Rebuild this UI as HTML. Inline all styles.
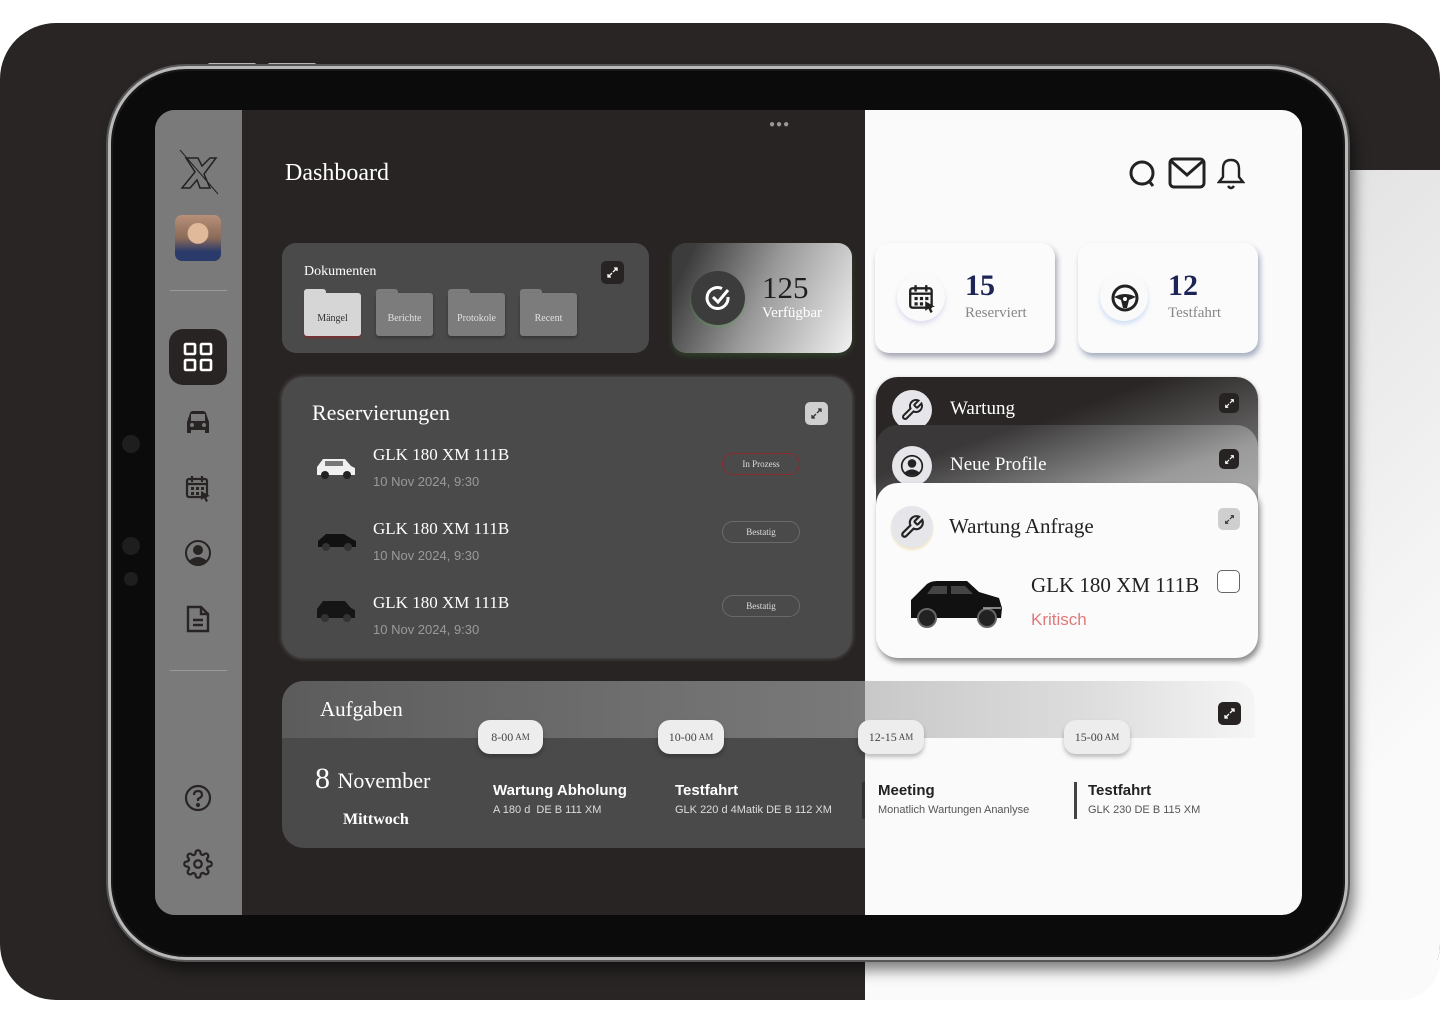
<!DOCTYPE html>
<html><head><meta charset="utf-8"><style>
*{box-sizing:border-box;margin:0;padding:0}
body{width:1440px;height:1024px;background:#fff;position:relative;overflow:hidden;font-family:"Liberation Sans",sans-serif}
.a{position:absolute}
.serif{font-family:"Liberation Serif",serif}
.exp{position:absolute;width:23px;height:23px;border-radius:5px;background:#262322;display:flex;align-items:center;justify-content:center}
.folder{position:absolute;top:289px;width:57px;height:47px}
.folder .tab{position:absolute;left:0;top:0;width:22px;height:8px;border-radius:3px 3px 0 0}
.folder .body{position:absolute;left:0;top:4px;width:57px;height:43px;border-radius:3px;font-family:"Liberation Serif",serif;font-size:10px;display:flex;align-items:center;justify-content:center;padding-top:8px;box-shadow:0 2px 3px rgba(0,0,0,.3)}
.row-t{position:absolute;left:373px;font-family:"Liberation Serif",serif;font-size:17px;color:#fff}
.row-d{position:absolute;left:373px;font-size:13px;color:#9a9a9a}
.badge{position:absolute;left:722px;width:78px;height:22px;border:1px solid #6a6a6a;border-radius:11px;color:#ddd;font-family:"Liberation Serif",serif;font-size:9px;display:flex;align-items:center;justify-content:center}
.pill{position:absolute;top:720px;height:34px;border-radius:12px;background:#ededed;box-shadow:0 3px 4px rgba(0,0,0,.25);font-family:"Liberation Serif",serif;font-size:12px;color:#444;display:flex;align-items:center;justify-content:center}
.pill small{font-size:9px;margin-left:2px}
.ev-t{position:absolute;top:782px;font-size:15px;font-weight:bold}
.ev-s{position:absolute;top:804px;font-size:11px}
.stat{position:absolute;top:243px;width:180px;height:110px;background:#fbfbfb;border-radius:14px;box-shadow:2px 4px 6px rgba(60,60,90,.45)}
.stat .c{position:absolute;left:22px;top:30px;width:48px;height:48px;border-radius:50%;background:#fafafa;box-shadow:0 3px 5px rgba(160,150,210,.3)}
.stat .n{position:absolute;left:90px;top:26px;font-family:"Liberation Serif",serif;font-size:30px;font-weight:bold;color:#1c2556}
.stat .l{position:absolute;left:90px;top:62px;font-family:"Liberation Serif",serif;font-size:15px;color:#888}
</style></head><body>
<!-- background -->
<div class="a" style="left:0;top:23px;width:1440px;height:977px;background:#282524;border-radius:56px"></div>
<div class="a" style="left:865px;top:170px;width:575px;height:830px;background:linear-gradient(135deg,#cfcfcf 0%,#e6e6e6 40%,#fafafa 80%);border-radius:0 0 56px 0"></div>
<div class="a" style="left:865px;top:960px;width:575px;height:40px;background:#fafafa;border-radius:0 0 56px 0"></div>
<!-- tablet -->
<div class="a" style="left:207px;top:63px;width:50px;height:6px;background:#bbb;border-radius:3px"></div>
<div class="a" style="left:267px;top:63px;width:50px;height:6px;background:#bbb;border-radius:3px"></div>
<div class="a" style="left:108px;top:66px;width:1240px;height:894px;border-radius:78px;background:#1a1818;border:3px solid #b9b9b9;box-shadow:0 0 0 2px #555, 6px 10px 14px rgba(0,0,0,.5)"></div>
<div class="a" style="left:113px;top:71px;width:1230px;height:884px;border-radius:74px;background:#0b0b0b"></div>
<!-- screen -->
<div class="a" style="left:155px;top:110px;width:1147px;height:805px;border-radius:20px;overflow:hidden;background:#fafafa">
 <div class="a" style="left:0;top:0;width:710px;height:805px;background:#282423"></div>
 <div class="a" style="left:0;top:0;width:87px;height:805px;background:#7a7a7a"></div>
</div>
<!-- sidebar -->
<svg class="a" style="left:176px;top:148px" width="46" height="48" viewBox="0 0 46 48"><path d="M4 2 L42 46" stroke="#222" stroke-width="1"/><path d="M10 10 L22 10 L26 18 L34 10 L40 10 L28 26 L34 40 L24 40 L21 32 L14 40 L6 40 L19 24 Z" fill="none" stroke="#222" stroke-width="1.5"/></svg>
<div class="a" style="left:175px;top:215px;width:46px;height:46px;border-radius:7px;background:radial-gradient(circle at 50% 40%,#e0b89a 0 28%,transparent 30%),linear-gradient(180deg,#b89078 0%,#8a6a58 50%,#2a3a6a 80%)"></div>
<div class="a" style="left:170px;top:290px;width:57px;height:1px;background:#9a9a9a"></div>
<div class="a" style="left:169px;top:329px;width:58px;height:56px;border-radius:14px;background:#282423"></div>
<svg class="a" style="left:183px;top:342px" width="30" height="30" viewBox="0 0 30 30" fill="none" stroke="#fff" stroke-width="2.6"><rect x="2" y="2" width="10" height="10" rx="1"/><rect x="18" y="2" width="10" height="10" rx="1"/><rect x="2" y="18" width="10" height="10" rx="1"/><rect x="18" y="18" width="10" height="10" rx="1"/></svg>
<svg class="a" style="left:184px;top:408px" width="28" height="28" viewBox="0 0 28 28"><path d="M3 14 L6 5 Q7 3 9 3 L19 3 Q21 3 22 5 L25 14 L25 25 L21 25 L21 22 L7 22 L7 25 L3 25 Z" fill="#282423"/><rect x="7" y="6" width="14" height="7" fill="#7a7a7a"/><circle cx="8" cy="17" r="2" fill="#7a7a7a"/><circle cx="20" cy="17" r="2" fill="#7a7a7a"/></svg>
<svg class="a" style="left:184px;top:474px" width="28" height="28" viewBox="0 0 28 28" fill="none" stroke="#282423" stroke-width="2.2"><rect x="3" y="5" width="20" height="18" rx="2"/><path d="M8 2v6M18 2v6M3 10h20"/><g fill="#282423" stroke="none"><rect x="7" y="13" width="3" height="3"/><rect x="12" y="13" width="3" height="3"/><rect x="17" y="13" width="3" height="3"/><rect x="7" y="18" width="3" height="3"/><rect x="12" y="18" width="3" height="3"/><path d="M17 17 L26 22 L22 23 L24 27 L22 28 L20 24 L17 26 Z"/></g></svg>
<svg class="a" style="left:184px;top:539px" width="28" height="28" viewBox="0 0 28 28"><circle cx="14" cy="14" r="12" fill="none" stroke="#282423" stroke-width="2"/><circle cx="14" cy="11" r="5" fill="#282423"/><path d="M5 22 Q14 14 23 22 Q14 28 5 22Z" fill="#282423"/></svg>
<svg class="a" style="left:185px;top:604px" width="26" height="30" viewBox="0 0 26 30" fill="none" stroke="#282423" stroke-width="2.4"><path d="M3 3 H16 L23 10 V27 H3 Z"/><path d="M16 3 V10 H23 M8 16 H18 M8 21 H18"/></svg>
<div class="a" style="left:170px;top:670px;width:57px;height:1px;background:#9a9a9a"></div>
<svg class="a" style="left:184px;top:784px" width="28" height="28" viewBox="0 0 28 28" fill="none" stroke="#282423" stroke-width="2.2"><circle cx="14" cy="14" r="12"/><path d="M10 11 Q10 7 14 7 Q18 7 18 11 Q18 13 14 15 V17"/><circle cx="14" cy="21" r="1" fill="#282423"/></svg>
<svg class="a" style="left:183px;top:849px" width="30" height="30" viewBox="0 0 24 24" fill="none" stroke="#282423" stroke-width="1.8"><circle cx="12" cy="12" r="3"/><path d="M19.4 15a1.65 1.65 0 0 0 .33 1.82l.06.06a2 2 0 1 1-2.83 2.83l-.06-.06a1.65 1.65 0 0 0-1.82-.33 1.65 1.65 0 0 0-1 1.51V21a2 2 0 1 1-4 0v-.09A1.65 1.65 0 0 0 9 19.4a1.65 1.65 0 0 0-1.82.33l-.06.06a2 2 0 1 1-2.83-2.83l.06-.06A1.65 1.65 0 0 0 4.68 15a1.65 1.65 0 0 0-1.51-1H3a2 2 0 1 1 0-4h.09A1.65 1.65 0 0 0 4.6 9a1.65 1.65 0 0 0-.33-1.82l-.06-.06a2 2 0 1 1 2.83-2.83l.06.06A1.65 1.65 0 0 0 9 4.68 1.65 1.65 0 0 0 10 3.17V3a2 2 0 1 1 4 0v.09a1.65 1.65 0 0 0 1 1.51 1.65 1.65 0 0 0 1.82-.33l.06-.06a2 2 0 1 1 2.83 2.83l-.06.06A1.65 1.65 0 0 0 19.4 9a1.65 1.65 0 0 0 1.51 1H21a2 2 0 1 1 0 4h-.09a1.65 1.65 0 0 0-1.51 1z"/></svg>

<!-- header -->
<div class="a serif" style="left:285px;top:160px;font-size:24px;color:#fff">Dashboard</div>
<div class="a" style="left:769px;top:119px;font-size:10px;color:#999;letter-spacing:1px">●●●</div>
<svg class="a" style="left:1127px;top:158px" width="32" height="32" viewBox="0 0 32 32" fill="none" stroke="#222" stroke-width="3"><circle cx="15" cy="15" r="11"/><path d="M22 23 L26 28"/></svg>
<svg class="a" style="left:1168px;top:157px" width="38" height="32" viewBox="0 0 38 32" fill="none" stroke="#222" stroke-width="3"><rect x="2" y="2" width="34" height="28" rx="4"/><path d="M3 4 L19 18 L35 4"/></svg>
<svg class="a" style="left:1217px;top:157px" width="28" height="34" viewBox="0 0 28 34" fill="none" stroke="#222" stroke-width="2.4"><path d="M14 3 Q6 3 6 12 V20 L2 25 H26 L22 20 V12 Q22 3 14 3Z"/><path d="M11 29 Q14 33 17 29"/></svg>

<!-- Dokumenten -->
<div class="a" style="left:282px;top:243px;width:367px;height:110px;background:#4a4a4a;border-radius:14px"></div>
<div class="a serif" style="left:304px;top:264px;font-size:14px;color:#fff">Dokumenten</div>
<div class="exp" style="left:601px;top:261px"><svg width="13" height="13" viewBox="0 0 13 13" fill="none" stroke="#fff" stroke-width="1.3"><path d="M7 6 L11 2 M8 2 H11 V5 M6 7 L2 11 M2 8 V11 H5"/></svg></div>
<div class="folder" style="left:304px"><div class="tab" style="background:#d6d6d6"></div><div class="body" style="background:#d6d6d6;color:#333;box-shadow:0 2px 2px #7a3030">Mängel</div></div>
<div class="folder" style="left:376px"><div class="tab" style="background:#7c7c7c"></div><div class="body" style="background:#7c7c7c;color:#e0e0e0">Berichte</div></div>
<div class="folder" style="left:448px"><div class="tab" style="background:#7c7c7c"></div><div class="body" style="background:#7c7c7c;color:#e0e0e0">Protokole</div></div>
<div class="folder" style="left:520px"><div class="tab" style="background:#7c7c7c"></div><div class="body" style="background:#7c7c7c;color:#e0e0e0">Recent</div></div>

<!-- Verfügbar -->
<div class="a" style="left:672px;top:243px;width:180px;height:110px;border-radius:14px;background:linear-gradient(115deg,#3c3c3c 10%,#9a9a9a 50%,#f2f2f2 100%);box-shadow:0 3px 6px rgba(60,120,60,.35)"></div>
<div class="a" style="left:691px;top:271px;width:54px;height:54px;border-radius:50%;background:#3c3c3c;box-shadow:0 2px 3px rgba(80,160,80,.4)"></div>
<svg class="a" style="left:704px;top:284px" width="28" height="28" viewBox="0 0 28 28" fill="none" stroke="#fff" stroke-width="3"><path d="M24 13 A10.5 10.5 0 1 1 18 4.5"/><path d="M9 13 L14 18 L24 6"/></svg>
<div class="a serif" style="left:762px;top:270px;font-size:31px;color:#1e1e1e">125</div>
<div class="a serif" style="left:762px;top:305px;font-size:15px;color:#fff">Verfügbar</div>

<!-- stats -->
<div class="stat" style="left:875px"><div class="c"></div>
<svg class="a" style="left:32px;top:40px" width="30" height="30" viewBox="0 0 28 28" fill="none" stroke="#222" stroke-width="2.2"><rect x="3" y="5" width="20" height="18" rx="2"/><path d="M8 2v6M18 2v6M3 10h20"/><g fill="#222" stroke="none"><rect x="7" y="13" width="3" height="3"/><rect x="12" y="13" width="3" height="3"/><rect x="17" y="13" width="3" height="3"/><rect x="7" y="18" width="3" height="3"/><rect x="12" y="18" width="3" height="3"/><path d="M17 17 L26 22 L22 23 L24 27 L22 28 L20 24 L17 26 Z"/></g></svg>
<div class="n">15</div><div class="l">Reserviert</div></div>
<div class="stat" style="left:1078px;box-shadow:2px 4px 6px rgba(60,80,120,.45)"><div class="c" style="box-shadow:0 3px 5px rgba(120,170,230,.35)"></div>
<svg class="a" style="left:32px;top:40px" width="30" height="30" viewBox="0 0 30 30"><circle cx="15" cy="15" r="12" fill="none" stroke="#222" stroke-width="3"/><path d="M4 14 Q15 8 26 14 L19 17 L17 25 L13 25 L11 17 Z" fill="#222"/><circle cx="15" cy="16" r="2" fill="#fff"/></svg>
<div class="n">12</div><div class="l">Testfahrt</div></div>

<!-- Reservierungen -->
<div class="a" style="left:282px;top:377px;width:570px;height:281px;background:#4a4a4a;border-radius:22px;box-shadow:0 0 4px 1px rgba(200,200,200,.25)"></div>
<div class="a serif" style="left:312px;top:400px;font-size:22px;color:#fff">Reservierungen</div>
<div class="exp" style="left:805px;top:402px;background:#cfcfcf"><svg width="13" height="13" viewBox="0 0 13 13" fill="none" stroke="#333" stroke-width="1.3"><path d="M7 6 L11 2 M8 2 H11 V5 M6 7 L2 11 M2 8 V11 H5"/></svg></div>
<svg class="a" style="left:315px;top:455px" width="42" height="26" viewBox="0 0 42 26"><path d="M2 12 L8 4 L30 4 L36 11 L40 13 L40 20 L2 20 Z" fill="#f0f0f0"/><rect x="10" y="6" width="18" height="5" fill="#777"/><circle cx="10" cy="20" r="4" fill="#222"/><circle cx="32" cy="20" r="4" fill="#222"/></svg>
<div class="row-t" style="top:445px">GLK 180 XM 111B</div><div class="row-d" style="top:474px">10 Nov 2024, 9:30</div>
<div class="badge" style="top:453px;border-color:#8a2a2a">In Prozess</div>
<svg class="a" style="left:316px;top:528px" width="42" height="24" viewBox="0 0 42 24"><path d="M2 13 L10 6 L28 6 L36 11 L40 13 L40 19 L2 19 Z" fill="#111"/><circle cx="10" cy="19" r="4" fill="#333"/><circle cx="32" cy="19" r="4" fill="#333"/></svg>
<div class="row-t" style="top:519px">GLK 180 XM 111B</div><div class="row-d" style="top:548px">10 Nov 2024, 9:30</div>
<div class="badge" style="top:521px">Bestatig</div>
<svg class="a" style="left:315px;top:597px" width="42" height="28" viewBox="0 0 42 28"><path d="M2 12 L8 4 L30 4 L36 11 L40 13 L40 21 L2 21 Z" fill="#151515"/><circle cx="10" cy="21" r="4" fill="#333"/><circle cx="32" cy="21" r="4" fill="#333"/></svg>
<div class="row-t" style="top:593px">GLK 180 XM 111B</div><div class="row-d" style="top:622px">10 Nov 2024, 9:30</div>
<div class="badge" style="top:595px">Bestatig</div>

<!-- stack -->
<div class="a" style="left:876px;top:377px;width:382px;height:120px;border-radius:22px;background:linear-gradient(160deg,#2a2626 40%,#8a8a8a 100%);box-shadow:0 2px 5px rgba(0,0,0,.4)"></div>
<div class="a" style="left:892px;top:390px;width:40px;height:40px;border-radius:50%;background:#e6e6ea"></div>
<svg class="a" style="left:900px;top:398px" width="24" height="24" viewBox="0 0 24 24" fill="none" stroke="#222" stroke-width="2"><path d="M14.7 6.3a1 1 0 0 0 0 1.4l1.6 1.6a1 1 0 0 0 1.4 0l3.77-3.77a6 6 0 0 1-7.94 7.94l-6.91 6.91a2.12 2.12 0 0 1-3-3l6.91-6.91a6 6 0 0 1 7.94-7.94l-3.76 3.76z"/></svg>
<div class="a serif" style="left:950px;top:398px;font-size:19px;color:#fff">Wartung</div>
<div class="exp" style="left:1219px;top:393px;width:20px;height:20px"><svg width="11" height="11" viewBox="0 0 13 13" fill="none" stroke="#fff" stroke-width="1.3"><path d="M7 6 L11 2 M8 2 H11 V5 M6 7 L2 11 M2 8 V11 H5"/></svg></div>
<div class="a" style="left:876px;top:425px;width:382px;height:120px;border-radius:22px;background:linear-gradient(160deg,#3a3838 20%,#9a9a9a 60%,#b8b8b8 100%)"></div>
<div class="a" style="left:892px;top:446px;width:40px;height:40px;border-radius:50%;background:#e6e6ea"></div>
<svg class="a" style="left:900px;top:454px" width="24" height="24" viewBox="0 0 28 28"><circle cx="14" cy="14" r="12" fill="none" stroke="#222" stroke-width="2"/><circle cx="14" cy="11" r="5" fill="#222"/><path d="M5 22 Q14 14 23 22 Q14 28 5 22Z" fill="#222"/></svg>
<div class="a serif" style="left:950px;top:454px;font-size:19px;color:#fff">Neue Profile</div>
<div class="exp" style="left:1219px;top:449px;width:20px;height:20px"><svg width="11" height="11" viewBox="0 0 13 13" fill="none" stroke="#fff" stroke-width="1.3"><path d="M7 6 L11 2 M8 2 H11 V5 M6 7 L2 11 M2 8 V11 H5"/></svg></div>
<div class="a" style="left:876px;top:483px;width:382px;height:175px;border-radius:22px;background:#fbfbfb;box-shadow:2px 4px 6px rgba(0,0,0,.45)"></div>
<div class="a" style="left:891px;top:506px;width:42px;height:42px;border-radius:50%;background:#e6e6ea;box-shadow:0 2px 2px rgba(230,210,140,.5)"></div>
<svg class="a" style="left:899px;top:514px" width="26" height="26" viewBox="0 0 24 24" fill="none" stroke="#222" stroke-width="2"><path d="M14.7 6.3a1 1 0 0 0 0 1.4l1.6 1.6a1 1 0 0 0 1.4 0l3.77-3.77a6 6 0 0 1-7.94 7.94l-6.91 6.91a2.12 2.12 0 0 1-3-3l6.91-6.91a6 6 0 0 1 7.94-7.94l-3.76 3.76z"/></svg>
<div class="a serif" style="left:949px;top:514px;font-size:21px;color:#222">Wartung Anfrage</div>
<div class="exp" style="left:1218px;top:508px;width:22px;height:22px;background:#cfcfcf"><svg width="11" height="11" viewBox="0 0 13 13" fill="none" stroke="#333" stroke-width="1.3"><path d="M7 6 L11 2 M8 2 H11 V5 M6 7 L2 11 M2 8 V11 H5"/></svg></div>
<svg class="a" style="left:907px;top:578px" width="98" height="52" viewBox="0 0 98 52"><path d="M4 22 L20 6 Q24 3 30 3 L60 3 L72 14 L92 20 L95 30 L94 40 L4 40 Z" fill="#111"/><path d="M26 8 L40 8 L40 16 L20 16 Z M44 8 L58 8 L66 16 L44 16Z" fill="#444"/><circle cx="20" cy="40" r="9" fill="#222" stroke="#666" stroke-width="2"/><circle cx="80" cy="40" r="9" fill="#222" stroke="#666" stroke-width="2"/><path d="M76 30 H94" stroke="#aaa" stroke-width="1.5"/></svg>
<div class="a serif" style="left:1031px;top:573px;font-size:21px;color:#222">GLK 180 XM 111B</div>
<div class="a" style="left:1031px;top:610px;font-size:17px;color:#e07a7a">Kritisch</div>
<div class="a" style="left:1217px;top:570px;width:23px;height:23px;border:1.5px solid #666;border-radius:5px;background:#fff"></div>

<!-- Aufgaben -->
<div class="a" style="left:282px;top:681px;width:583px;height:167px;border-radius:22px 0 0 22px;background:#4a4a4a;overflow:hidden">
 <div class="a" style="left:0;top:0;width:583px;height:57px;background:linear-gradient(90deg,#5c5c5c,#7a7a7a)"></div>
</div>
<div class="a" style="left:865px;top:681px;width:390px;height:57px;background:linear-gradient(90deg,#c8c8c8,#dedede 60%,#f5f5f5 100%);border-radius:0 22px 0 0"></div>
<div class="a serif" style="left:320px;top:697px;font-size:21px;color:#fff">Aufgaben</div>
<div class="exp" style="left:1218px;top:702px"><svg width="13" height="13" viewBox="0 0 13 13" fill="none" stroke="#fff" stroke-width="1.3"><path d="M7 6 L11 2 M8 2 H11 V5 M6 7 L2 11 M2 8 V11 H5"/></svg></div>
<div class="a serif" style="left:315px;top:762px;font-size:30px;color:#fff">8 <span style="font-size:22px">November</span></div>
<div class="a serif" style="left:343px;top:811px;font-size:16px;color:#fff;font-weight:bold">Mittwoch</div>
<div class="pill" style="left:478px;width:65px">8-00<small>AM</small></div>
<div class="pill" style="left:658px;width:66px">10-00<small>AM</small></div>
<div class="pill" style="left:858px;width:66px">12-15<small>AM</small></div>
<div class="pill" style="left:1064px;width:66px">15-00<small>AM</small></div>
<div class="ev-t" style="left:493px;color:#fff">Wartung Abholung</div><div class="ev-s" style="left:493px;color:#ddd">A 180 d &nbsp;DE B 111 XM</div>
<div class="ev-t" style="left:675px;color:#fff">Testfahrt</div><div class="ev-s" style="left:675px;color:#ddd">GLK 220 d 4Matik DE B 112 XM</div>
<div class="a" style="left:862px;top:782px;width:3px;height:37px;background:#333"></div>
<div class="ev-t" style="left:878px;color:#222">Meeting</div><div class="ev-s" style="left:878px;color:#555">Monatlich Wartungen Ananlyse</div>
<div class="a" style="left:1074px;top:782px;width:3px;height:37px;background:#444"></div>
<div class="ev-t" style="left:1088px;color:#222">Testfahrt</div><div class="ev-s" style="left:1088px;color:#555">GLK 230 DE B 115 XM</div>
<!-- camera dots -->
<div class="a" style="left:122px;top:435px;width:18px;height:18px;border-radius:50%;background:#1e1e1e"></div>
<div class="a" style="left:122px;top:537px;width:18px;height:18px;border-radius:50%;background:#1e1e1e"></div>
<div class="a" style="left:124px;top:572px;width:14px;height:14px;border-radius:50%;background:#1e1e1e"></div>
</body></html>
